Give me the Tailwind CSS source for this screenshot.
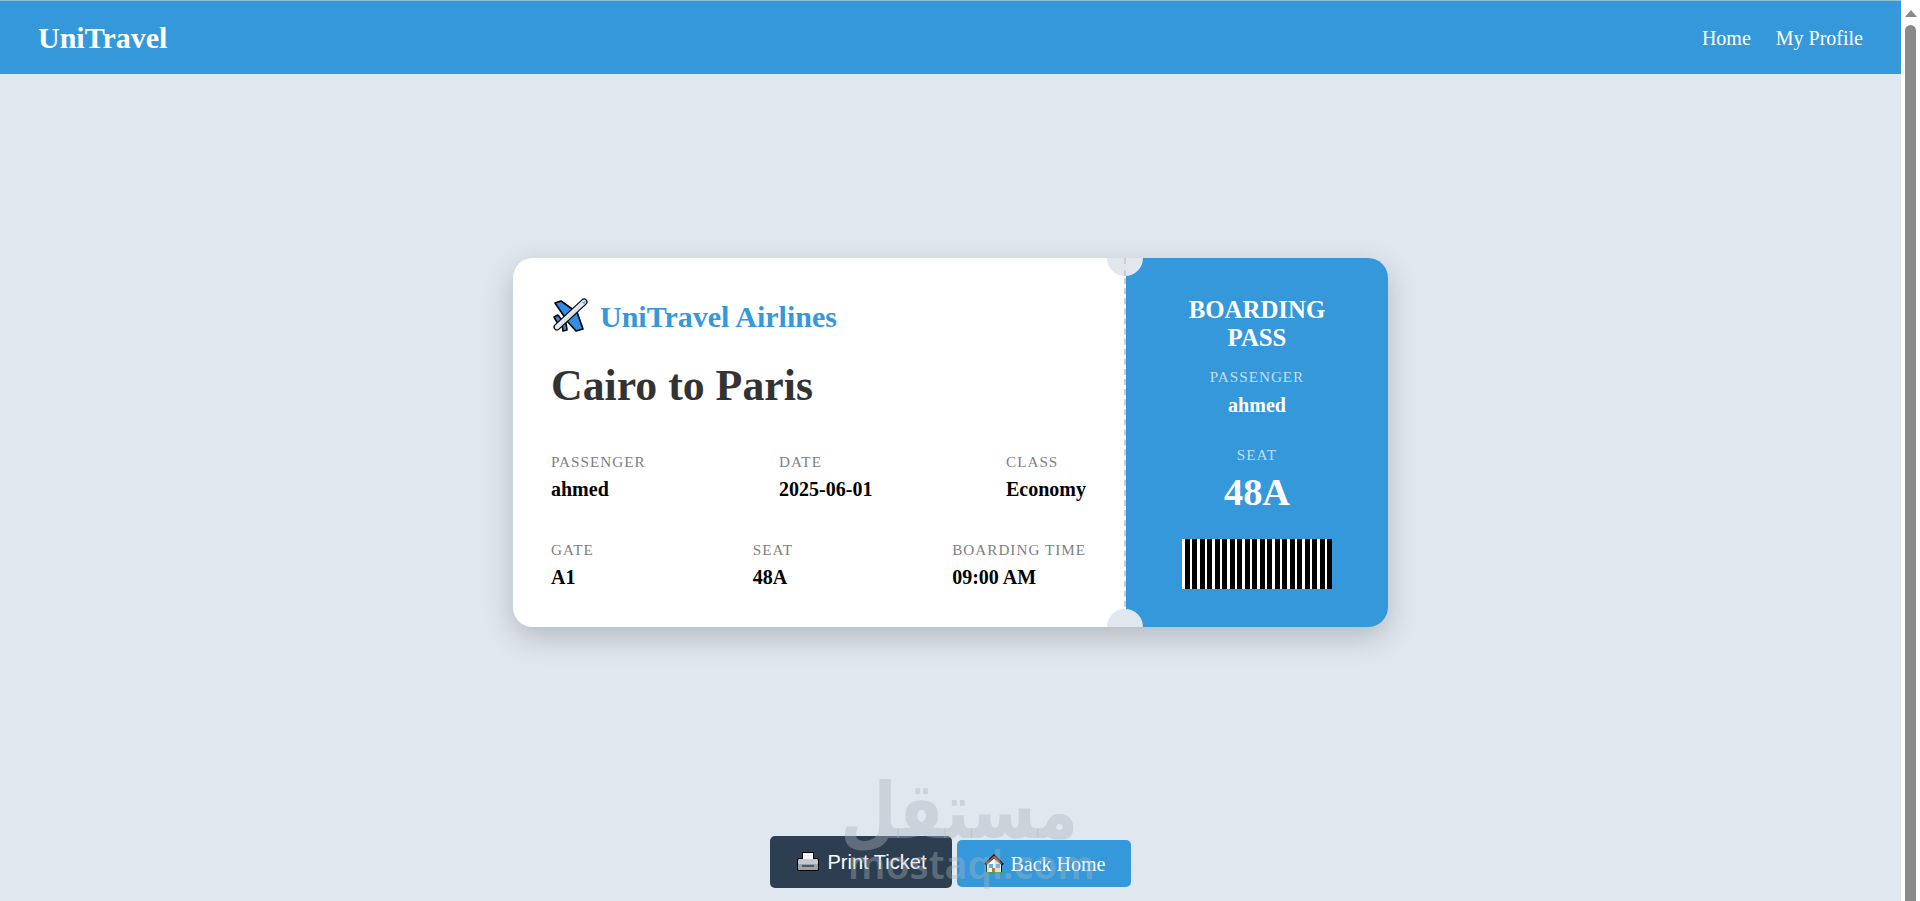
<!DOCTYPE html>
<html lang="en">
<head>
    <meta charset="UTF-8">
    <meta name="viewport" content="width=device-width, initial-scale=1.0">
    <title>UniTravel Boarding Pass</title>
    <script src="https://cdn.jsdelivr.net/npm/@tailwindcss/browser@4"></script>
</head>
<body class="h-[901px] overflow-hidden bg-[#e0e7ef] font-['Liberation_Serif',serif] flex">
    <div class="flex-1 min-w-0 relative">
        <!-- Navbar -->
        <header class="h-[74px] border-t border-[#8fc3d8] bg-[#3498db] text-white flex items-center justify-between px-[38px]">
            <a class="text-[30px] font-bold">UniTravel</a>
            <nav class="flex gap-[25px] text-[20px]">
                <a>Home</a>
                <a>My Profile</a>
            </nav>
        </header>

        <main class="flex flex-col items-center">
            <!-- Ticket -->
            <div class="mt-[184px] w-[875px] h-[369px] flex rounded-[20px] overflow-hidden shadow-[0_10px_30px_rgba(0,0,0,0.2)] relative">
                <section class="w-[613px] bg-white border-r-2 border-dashed border-[#ccc] pl-[38px] pr-[38px] pt-[40px]">
                    <div class="flex items-center gap-[11px] h-[36px]">
                        <svg class="w-[38px] h-[36px]" viewBox="-2 -1 38 36">
                            <g stroke="#000" stroke-width="1.6" stroke-linejoin="round" fill="#2f8fe0">
                                <path d="M2 4 L8 2 L22 12 L13 20 Z"/>
                                <path d="M24 13 L30 30 L23 32 L14 22 Z"/>
                                <path d="M1 18 L5 16 L10 23 L5 25 Z"/>
                                <path d="M9 25 L13 24 L14 31 L10 32 Z"/>
                            </g>
                            <path d="M4 28 L31 3" stroke="#000" stroke-width="7" stroke-linecap="round"/>
                            <path d="M4 28 L31 3" stroke="#e4e9f0" stroke-width="4.6" stroke-linecap="round"/>
                            <path d="M8 26 L28 7" stroke="#c3ccd8" stroke-width="1.2" stroke-dasharray="1 1"/>
                            <path d="M29 3.5 L32.5 2 L31.5 5.5 Z" fill="#4fb0ee"/>
                        </svg>
                        <span class="text-[30px] font-bold text-[#3498db]">UniTravel Airlines</span>
                    </div>
                    <h1 class="mt-[25px] text-[43.8px] font-bold text-[#333] leading-[52px]">Cairo to Paris</h1>

                    <div class="mt-[42px] flex justify-between">
                        <div>
                            <p class="text-[15.2px] tracking-[1px] text-[#808080] uppercase leading-[17px]">Passenger</p>
                            <p class="mt-[8px] text-[20px] font-bold text-black leading-[22px]">ahmed</p>
                        </div>
                        <div>
                            <p class="text-[15.2px] tracking-[1px] text-[#808080] uppercase leading-[17px]">Date</p>
                            <p class="mt-[8px] text-[20px] font-bold text-black leading-[22px]">2025-06-01</p>
                        </div>
                        <div>
                            <p class="text-[15.2px] tracking-[1px] text-[#808080] uppercase leading-[17px]">Class</p>
                            <p class="mt-[8px] text-[20px] font-bold text-black leading-[22px]">Economy</p>
                        </div>
                    </div>
                    <div class="mt-[41px] flex justify-between">
                        <div>
                            <p class="text-[15.2px] tracking-[1px] text-[#808080] uppercase leading-[17px]">Gate</p>
                            <p class="mt-[8px] text-[20px] font-bold text-black leading-[22px]">A1</p>
                        </div>
                        <div>
                            <p class="text-[15.2px] tracking-[1px] text-[#808080] uppercase leading-[17px]">Seat</p>
                            <p class="mt-[8px] text-[20px] font-bold text-black leading-[22px]">48A</p>
                        </div>
                        <div>
                            <p class="text-[15.2px] tracking-[1px] text-[#808080] uppercase leading-[17px]">Boarding Time</p>
                            <p class="mt-[8px] text-[20px] font-bold text-black leading-[22px]">09:00 AM</p>
                        </div>
                    </div>
                </section>

                <section class="flex-1 bg-[#3498db] text-white flex flex-col items-center text-center pt-[38px]">
                    <h2 class="w-[160px] text-[24.8px] font-bold leading-[28px]">BOARDING PASS</h2>
                    <p class="mt-[16px] text-[15.2px] tracking-[1px] text-white/70 leading-[17px]">PASSENGER</p>
                    <p class="mt-[10px] text-[20px] font-bold leading-[20px]">ahmed</p>
                    <p class="mt-[31px] text-[15.2px] tracking-[1px] text-white/70 leading-[17px]">SEAT</p>
                    <p class="mt-[6px] text-[38.4px] font-bold leading-[46px]">48A</p>
                    <div class="mt-[24px] w-[150px] h-[50px] bg-[repeating-linear-gradient(90deg,#fff_0,#fff_3px,#000_3px,#000_8px,#fff_8px,#fff_10px,#000_10px,#000_15px)]"></div>
                </section>

                <!-- Notches -->
                <span class="absolute left-[594px] top-[-18px] w-[36px] h-[36px] rounded-full bg-[#e0e7ef]"></span>
                <span class="absolute left-[594px] bottom-[-18px] w-[36px] h-[36px] rounded-full bg-[#e0e7ef]"></span>
                <span class="absolute left-[611px] top-0 h-[18px] border-r-2 border-dashed border-[#ccc]"></span>
            </div>

            <!-- Actions -->
            <div class="mt-[209px] flex items-start gap-[5px]">
                <button class="w-[182px] h-[52px] rounded-[5px] bg-[#2c3e50] text-white flex items-center justify-center gap-[8px] font-['Liberation_Sans',sans-serif] text-[20px]">
                    <svg class="w-[24px] h-[24px]" viewBox="0 0 24 24">
                        <path d="M6 2 H18 V8 H21 Q23 8 23 11 V19 Q23 21 21 21 H3 Q1 21 1 19 V11 Q1 8 3 8 H6 Z" fill="#000"/>
                        <path d="M7 3 H17 V10 H7 Z" fill="#f4f6f8"/>
                        <path d="M3 9 H21 Q22 9 22 11 V14 H2 V11 Q2 9 3 9 Z" fill="#c3c9cf"/>
                        <path d="M2 14 H22 V19 Q22 20 21 20 H3 Q2 20 2 19 Z" fill="#9aa2aa"/>
                        <path d="M6 15 H18 V17 H6 Z" fill="#50565c"/>
                        <path d="M3 11 H6 V12 H3 Z" fill="#f4b65a"/>
                    </svg>
                    <span>Print Ticket</span>
                </button>
                <button class="mt-[4px] w-[174px] h-[47px] rounded-[5px] bg-[#3498db] text-white flex items-center justify-center gap-[6px] text-[20px]">
                    <svg class="w-[22px] h-[22px]" viewBox="0 0 22 22">
                        <path d="M11 1 L21 11 L19 12 V21 H3 V12 L1 11 Z" fill="#000"/>
                        <path d="M11 2.5 L19.5 10.5 L18 11 L11 5 L4 11 L2.5 10.5 Z" fill="#b5572a"/>
                        <path d="M11 5.5 L18 11.5 V19 H4 V11.5 Z" fill="#f5f7fa"/>
                        <path d="M6 11 H10 V15 H6 Z M13 11 H17 V15 H13 Z" fill="#58b4ee"/>
                        <path d="M9 15 H12 V19 H9 Z" fill="#c8703a"/>
                        <path d="M2 19 H20 V21 H2 Z" fill="#3ea83e"/>
                    </svg>
                    <span>Back Home</span>
                </button>
            </div>
        </main>

        <!-- Watermark -->
        <div class="absolute left-[848px] top-[768px] w-[230px] text-center text-[#adb5bd]/40 pointer-events-none">
            <p class="font-['DejaVu_Sans',sans-serif] text-[65px] font-bold leading-[76px] scale-y-[1.2] translate-y-[6px]" dir="rtl" lang="ar">مستقل</p>
            <p class="font-['Noto_Sans',sans-serif] text-[39px] font-semibold leading-[40px] whitespace-nowrap">mostaql.com</p>
        </div>
    </div>

    <!-- Scrollbar -->
    <aside class="w-[19px] bg-white flex flex-col items-center">
        <span class="mt-[10px] w-0 h-0 border-x-[6px] border-x-transparent border-b-[7px] border-b-[#8a8a8a]"></span>
        <span class="mt-[8px] w-[11px] flex-1 rounded-t-[6px] bg-[#8a8a8a]"></span>
    </aside>
</body>
</html>
